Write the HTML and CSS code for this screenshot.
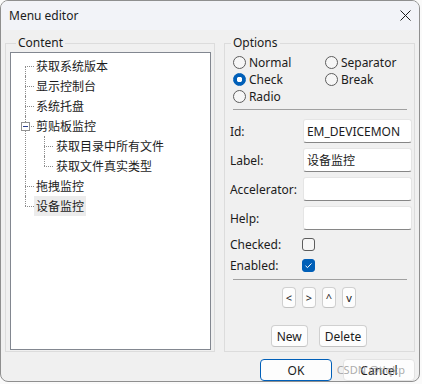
FILE: index.html
```html
<!DOCTYPE html>
<html lang="en">
<head>
    <meta charset="utf-8" />
    <title>Menu editor</title>
    <link rel="stylesheet" href="styles.css">
</head>
<body>
    <div class="window">
        <div class="titlebar">
            <span class="title">Menu editor</span>
            <svg class="close" width="11" height="11" viewBox="0 0 11 11">
                <path d="M0.5 0.5 L10.5 10.5 M10.5 0.5 L0.5 10.5" stroke="#1b1b1b" stroke-width="1" fill="none" />
            </svg>
        </div>
        <div class="client">
            <div class="groups">
                <fieldset class="group content-group">
                    <legend>Content</legend>
                    <div class="tree">
                        <ul class="tree-root">
                            <li><span class="node">获取系统版本</span></li>
                            <li><span class="node">显示控制台</span></li>
                            <li><span class="node">系统托盘</span></li>
                            <li>
                                <span class="toggle"></span><span class="node">剪贴板监控</span>
                                <ul>
                                    <li><span class="node">获取目录中所有文件</span></li>
                                    <li><span class="node">获取文件真实类型</span></li>
                                </ul>
                            </li>
                            <li><span class="node">拖拽监控</span></li>
                            <li><span class="node selected">设备监控</span></li>
                        </ul>
                    </div>
                </fieldset>

                <fieldset class="group options-group">
                    <legend>Options</legend>
                    <div class="kinds">
                        <label class="choice"><input type="radio" name="kind"> Normal</label>
                        <label class="choice"><input type="radio" name="kind"> Separator</label>
                        <label class="choice"><input type="radio" name="kind" checked> Check</label>
                        <label class="choice"><input type="radio" name="kind"> Break</label>
                        <label class="choice"><input type="radio" name="kind"> Radio</label>
                    </div>
                    <div class="sep"></div>
                    <div class="fields">
                        <label for="itemId">Id:</label>
                        <input type="text" id="itemId" value="EM_DEVICEMON">
                        <label for="itemLabel">Label:</label>
                        <input type="text" id="itemLabel" value="设备监控">
                        <label for="itemAccel">Accelerator:</label>
                        <input type="text" id="itemAccel">
                        <label for="itemHelp">Help:</label>
                        <input type="text" id="itemHelp">
                    </div>
                    <div class="flags">
                        <label for="itemChecked">Checked:</label>
                        <input type="checkbox" id="itemChecked">
                        <label for="itemEnabled">Enabled:</label>
                        <input type="checkbox" id="itemEnabled" checked>
                    </div>
                    <div class="sep sep-low"></div>
                    <div class="moves">
                        <button class="btn small">&lt;</button>
                        <button class="btn small">&gt;</button>
                        <button class="btn small">^</button>
                        <button class="btn small">v</button>
                    </div>
                    <div class="edits">
                        <button class="btn">New</button>
                        <button class="btn">Delete</button>
                    </div>
                </fieldset>
            </div>
            <div class="footer">
                <button class="btn wide default">OK</button>
                <button class="btn wide cancel">Cancel</button>
                <span class="watermark">CSDN @tlqkp</span>
            </div>
        </div>
    </div>
</body>
</html>
```

FILE: styles.css
```css
:root {
    --font-family: "Noto Sans", "Noto Sans CJK SC", sans-serif;
    --font-color: #1b1b1b;
    --window-background: #f0f0f0;
    --title-background: #f2f3f8;
    --group-border: #dcdcdc;
    --tree-border: #828790;
    --tree-line: #8c8c8c;
    --accent: #005fb8;
    --button-border: #d0d0d0;
}

body {
    margin: 0;
    background-color: #fafafa;
    font-family: var(--font-family);
    font-size: 12px;
    color: var(--font-color);
}

.window {
    width: 418px;
    height: 380px;
    border: 1px solid #8f8f8f;
    border-radius: 8px;
    background-color: var(--window-background);
    overflow: hidden;
}

.titlebar {
    height: 29px;
    display: flex;
    align-items: center;
    justify-content: space-between;
    padding: 0 8px 0 8px;
    background-color: var(--title-background);
}

.title {
    font-size: 12px;
}

.client {
    padding: 5px 4px 0 4px;
}

.groups {
    display: flex;
    gap: 9px;
}

.group {
    margin: 0;
    padding: 0;
    border: 1px solid var(--group-border);
    min-width: 0;
}

.group legend {
    margin-left: 6px;
    padding: 0 2px;
    line-height: 16px;
}

.content-group {
    width: 207px;
    padding: 1px 0 1px 4px;
}

.options-group {
    width: 192px;
    padding: 3px 0 4px 0;
}

/* tree view */

.tree {
    width: 199px;
    height: 296px;
    border: 1px solid var(--tree-border);
    background-color: #fff;
    font-family: "Noto Sans CJK SC", sans-serif;
}

.tree ul {
    list-style: none;
    margin: 0;
    padding: 0;
}

.tree-root {
    padding-top: 3px !important;
}

.tree li {
    position: relative;
}

.node {
    display: inline-block;
    height: 20px;
    line-height: 20px;
    padding: 0 2px;
    vertical-align: top;
}

.node.selected {
    background-color: #ececec;
}

.tree li::before,
.tree li::after {
    content: "";
    position: absolute;
}

.tree-root > li {
    padding-left: 23px;
}

.tree-root > li::before {
    left: 14px;
    top: 10px;
    width: 9px;
    border-top: 1px dotted var(--tree-line);
}

.tree-root > li::after {
    left: 14px;
    top: 0;
    bottom: 0;
    border-left: 1px dotted var(--tree-line);
}

.tree-root > li:first-child::after {
    top: 10px;
}

.tree-root > li:last-child::after {
    bottom: auto;
    height: 10px;
}

.tree-root ul li {
    padding-left: 20px;
}

.tree-root ul li::before {
    left: 10px;
    top: 10px;
    width: 9px;
    border-top: 1px dotted var(--tree-line);
}

.tree-root ul li::after {
    left: 10px;
    top: 0;
    bottom: 0;
    border-left: 1px dotted var(--tree-line);
}

.tree-root ul li:last-child::after {
    bottom: auto;
    height: 10px;
}

.toggle {
    position: absolute;
    left: 10px;
    top: 6px;
    width: 7px;
    height: 7px;
    border: 1px solid #919191;
    background-color: #fff;
    z-index: 1;
}

.toggle::before {
    content: "";
    position: absolute;
    left: 1px;
    top: 3px;
    width: 5px;
    height: 1px;
    background-color: #2b3f8c;
}

/* options */

.kinds {
    display: grid;
    grid-template-columns: 92px 1fr;
    grid-auto-rows: 17px;
    padding-left: 8px;
}

.choice {
    display: flex;
    align-items: center;
    gap: 3px;
}

input[type="radio"],
input[type="checkbox"] {
    appearance: none;
    margin: 0;
    width: 13px;
    height: 13px;
    border: 1px solid #5c5c5c;
    background-color: #f6f6f6;
    box-sizing: border-box;
}

input[type="radio"] {
    border-radius: 50%;
}

input[type="radio"]:checked {
    border-color: var(--accent);
    background: radial-gradient(circle, #fff 0 2.6px, var(--accent) 3px);
}

input[type="checkbox"] {
    border-radius: 3px;
}

input[type="checkbox"]:checked {
    border-color: var(--accent);
    background-color: var(--accent);
    background-image: url("data:image/svg+xml,%3Csvg xmlns='http://www.w3.org/2000/svg' width='11' height='11' viewBox='0 0 11 11'%3E%3Cpath d='M2.5 5.8 L4.5 7.6 L8.5 3.4' stroke='white' stroke-width='1' fill='none'/%3E%3C/svg%3E");
}

.sep {
    height: 1px;
    margin: 4px 7px 0 8px;
    background-color: #a0a0a0;
}

.sep-low {
    margin-top: 3px;
}

.fields {
    display: grid;
    grid-template-columns: 73px 109px;
    grid-auto-rows: 24px;
    row-gap: 5px;
    align-items: center;
    margin-top: 9px;
    padding-left: 5px;
}

.fields input {
    height: 24px;
    box-sizing: border-box;
    padding: 0 3px;
    border: 1px solid #e5e5e5;
    border-bottom-color: #868686;
    border-radius: 3px;
    background-color: #fff;
    font-family: var(--font-family);
    font-size: 12px;
    color: var(--font-color);
    outline: none;
}

.flags {
    display: grid;
    grid-template-columns: 72px 13px;
    grid-auto-rows: 21px;
    align-items: center;
    margin-top: 4px;
    padding-left: 5px;
}

.moves {
    display: flex;
    justify-content: center;
    gap: 6px;
    margin-top: 7px;
    padding-right: 1px;
}

.edits {
    display: flex;
    justify-content: center;
    gap: 11px;
    margin-top: 17px;
    padding-right: 1px;
}

.btn {
    height: 22px;
    padding: 0 5px;
    border: 1px solid var(--button-border);
    border-bottom-color: #c2c2c2;
    border-radius: 4px;
    background-color: #fdfdfd;
    font-family: var(--font-family);
    font-size: 12px;
    color: var(--font-color);
}

.btn.small {
    width: 14px;
    height: 21px;
    padding: 0;
    font-size: 11px;
}

.footer {
    position: relative;
    display: flex;
    justify-content: flex-end;
    gap: 11px;
    margin-top: 7px;
}

.btn.wide {
    width: 72px;
}

.btn.default {
    border-color: var(--accent);
}

.btn.cancel {
    border-color: #e3e3e3;
}

.watermark {
    position: absolute;
    right: 10px;
    top: 2px;
    line-height: 18px;
    font-size: 11px;
    color: rgba(150, 150, 150, 0.8);
}
```
